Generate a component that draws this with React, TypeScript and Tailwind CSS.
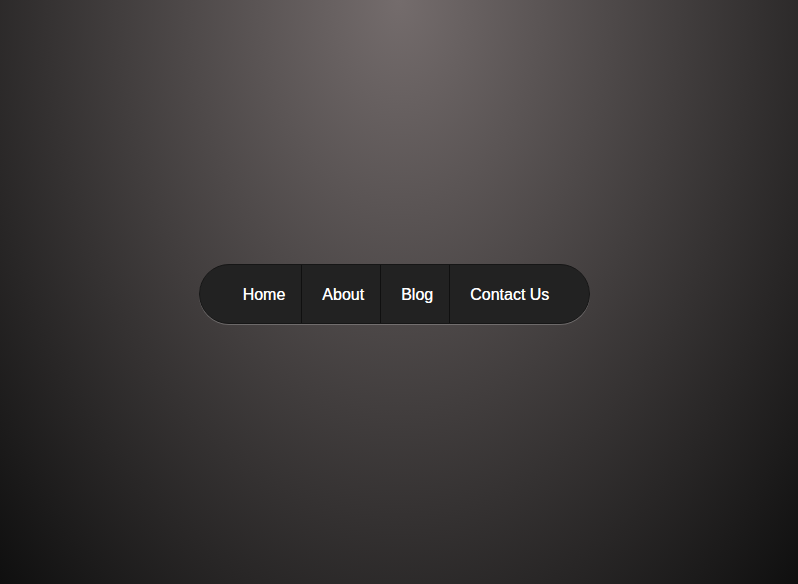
const links = ['Home', 'About', 'Blog', 'Contact Us'];

export default function App() {
  return (
    <div className="min-h-screen w-full bg-[radial-gradient(ellipse_at_top,#746c6c,#0f0f0f)] pt-[264px] pr-[9px] flex justify-center items-start">
      <nav className="flex h-[60px] rounded-full border border-[#161616] bg-[#222222] pl-[23px] pr-[24px] shadow-[0_1px_0_rgba(255,255,255,0.22)]">
        {links.map((label, i) => (
          <a
            key={label}
            href="#"
            className={`flex items-center pl-5 pr-4 pt-px text-[16px] text-white font-['Liberation_Sans',Arial,sans-serif] [text-shadow:0_0_0.4px_#fff] ${
              i < links.length - 1 ? 'border-r border-[#101010]' : ''
            }`}
          >
            {label}
          </a>
        ))}
      </nav>
    </div>
  );
}
